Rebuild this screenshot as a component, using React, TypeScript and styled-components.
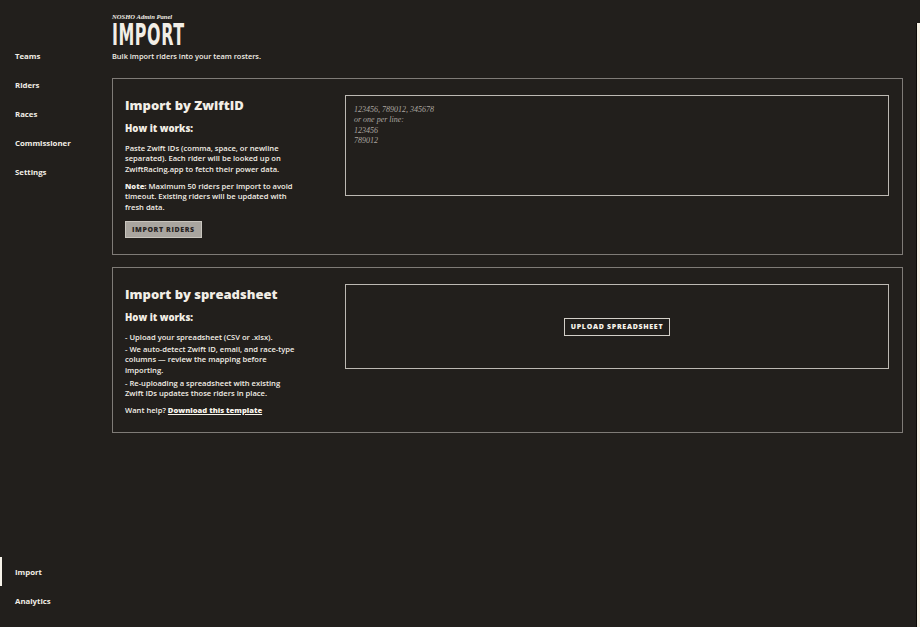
import React from "react";
import styled, { createGlobalStyle } from "styled-components";

const Global = createGlobalStyle`
  html, body { margin: 0; padding: 0; background: #221f1c; }
  body { font-family: "Open Sans", "DejaVu Sans", sans-serif; color: #f2eee6; }
  * { box-sizing: border-box; }
`;

const Page = styled.div`
  display: flex;
  width: 920px;
  height: 627px;
  overflow: hidden;
  background: #221f1c;
`;

const Sidebar = styled.nav`
  width: 112px;
  flex: none;
  display: flex;
  flex-direction: column;
  justify-content: space-between;
  padding: 41px 0 12px;
`;

const NavGroup = styled.div`
  display: flex;
  flex-direction: column;
`;

const NavItem = styled.a<{ $active?: boolean }>`
  display: flex;
  align-items: center;
  height: 29px;
  padding-left: 13px;
  font-size: 7.8px;
  font-weight: 700;
  color: #f2eee6;
  text-decoration: none;
  border-left: 2px solid ${(p) => (p.$active ? "#f7f3ea" : "transparent")};
`;

const Main = styled.main`
  flex: 1;
  display: flex;
  flex-direction: column;
  padding: 13px 13px 0 0;
`;

const Kicker = styled.div`
  font-family: "Liberation Serif", serif;
  font-style: italic;
  font-weight: bold;
  font-size: 6.6px;
  line-height: 8px;
`;

const Title = styled.h1`
  margin: 1px 0 0;
  font-family: "DejaVu Sans Condensed", "DejaVu Sans", sans-serif;
  font-weight: bold;
  font-size: 31px;
  line-height: 25px;
  height: 25px;
  display: block;
  width: max-content;
  transform: scaleX(0.57);
  transform-origin: left center;
  letter-spacing: 1px;
  white-space: nowrap;
`;

const Subtitle = styled.p`
  margin: 4.5px 0 0;
  font-size: 7.4px;
  line-height: 9px;
  font-weight: 600;
`;

const Cards = styled.div`
  display: flex;
  flex-direction: column;
  gap: 12px;
  margin-top: 17.5px;
`;

const Card = styled.section<{ $h: number }>`
  border: 1px solid #7f7b77;
  height: ${(p) => p.$h}px;
  display: grid;
  grid-template-columns: 220px 1fr;
  padding: 16px 13px 0 12px;
`;

const Info = styled.div`
  display: flex;
  flex-direction: column;
  max-width: 171.5px;
`;

const CardTitle = styled.h2`
  margin: 0;
  font-size: 13px;
  line-height: 20px;
  font-weight: 800;
  white-space: nowrap;
`;

const HowTitle = styled.h3`
  margin: 7px 0 0;
  font-size: 9.6px;
  line-height: 14px;
  font-weight: 800;
`;

const Para = styled.p<{ $gap: number }>`
  margin: ${(p) => p.$gap}px 0 0;
  font-size: 7.6px;
  line-height: 10.5px;
  font-weight: 600;
  b { font-weight: 800; }
`;

const Help = styled(Para)`
  a { color: #f7f3ea; font-weight: 800; text-decoration: underline; }
`;

const PrimaryButton = styled.button`
  align-self: flex-start;
  margin-top: 8.75px;
  height: 17px;
  padding: 0 6px;
  background: #a9a59f;
  border: 1px solid #c9c5be;
  color: #27231f;
  font-family: "Open Sans", sans-serif;
  font-weight: 800;
  font-size: 7px;
  letter-spacing: 0.6px;
  text-transform: uppercase;
`;

const TextArea = styled.textarea`
  height: 101px;
  background: #221f1c;
  border: 1px solid #bdb9b3;
  resize: none;
  padding: 9px 8px;
  font-family: "Liberation Serif", serif;
  font-style: italic;
  font-size: 8px;
  line-height: 10.4px;
  color: #f2eee6;
  &::placeholder { color: #aaa6a0; opacity: 1; }
`;

const Drop = styled.div`
  height: 85px;
  border: 1px solid #bdb9b3;
  display: flex;
  align-items: center;
  justify-content: center;
`;

const GhostButton = styled.button`
  height: 18px;
  padding: 0 6px;
  background: transparent;
  border: 1px solid #d3cfc8;
  color: #f7f3ea;
  font-family: "Open Sans", sans-serif;
  font-weight: 800;
  font-size: 7px;
  letter-spacing: 0.7px;
  text-transform: uppercase;
`;

const Strip = styled.div`
  width: 4px;
  flex: none;
  margin-top: 23px;
  background: #f7f2e6;
  border-left: 1px solid #0c0a08;
`;

export default function App() {
  return (
    <Page>
      <Global />
      <Sidebar>
        <NavGroup>
          <NavItem>Teams</NavItem>
          <NavItem>Riders</NavItem>
          <NavItem>Races</NavItem>
          <NavItem>Commissioner</NavItem>
          <NavItem>Settings</NavItem>
        </NavGroup>
        <NavGroup>
          <NavItem $active>Import</NavItem>
          <NavItem>Analytics</NavItem>
        </NavGroup>
      </Sidebar>
      <Main>
        <Kicker>NOSHO Admin Panel</Kicker>
        <Title>IMPORT</Title>
        <Subtitle>Bulk import riders into your team rosters.</Subtitle>
        <Cards>
          <Card $h={177}>
            <Info>
              <CardTitle>Import by ZwiftID</CardTitle>
              <HowTitle>How it works:</HowTitle>
              <Para $gap={6.75}>
                Paste Zwift IDs (comma, space, or newline separated). Each rider will be looked up on
                ZwiftRacing.app to fetch their power data.
              </Para>
              <Para $gap={6.5}>
                <b>Note:</b> Maximum 50 riders per import to avoid timeout. Existing riders will be
                updated with fresh data.
              </Para>
              <PrimaryButton>Import riders</PrimaryButton>
            </Info>
            <TextArea placeholder={"123456, 789012, 345678\nor one per line:\n123456\n789012"} />
          </Card>
          <Card $h={166}>
            <Info>
              <CardTitle>Import by spreadsheet</CardTitle>
              <HowTitle>How it works:</HowTitle>
              <Para $gap={6.75}>- Upload your spreadsheet (CSV or .xlsx).</Para>
              <Para $gap={1.5}>
                - We auto-detect Zwift ID, email, and race-type columns — review the mapping before
                importing.
              </Para>
              <Para $gap={2.5}>
                - Re-uploading a spreadsheet with existing Zwift IDs updates those riders in place.
              </Para>
              <Help $gap={6.5}>
                Want help? <a href="#">Download this template</a>
              </Help>
            </Info>
            <Drop>
              <GhostButton>Upload spreadsheet</GhostButton>
            </Drop>
          </Card>
        </Cards>
      </Main>
      <Strip />
    </Page>
  );
}
